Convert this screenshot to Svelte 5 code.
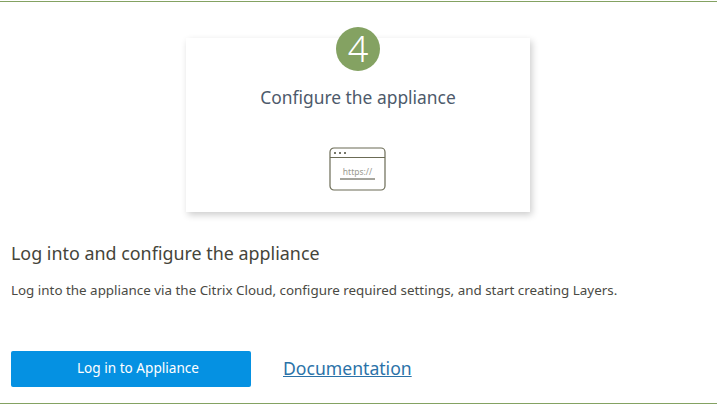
<script>
  const title = "Configure the appliance";
</script>

<div class="page">
  <div class="card">
    <div class="badge">4</div>
    <div class="card-title">{title}</div>
    <svg class="icon" width="58" height="44" viewBox="0 0 58 44" fill="none" stroke="#6b6b55">
      <rect x="1" y="1" width="55" height="42" rx="4" stroke-width="1.2" />
      <line x1="1" y1="10.5" x2="56" y2="10.5" stroke-width="1.2" />
      <circle cx="6" cy="6" r="1" fill="#4a4a3a" stroke="none" />
      <circle cx="11" cy="6" r="1" fill="#4a4a3a" stroke="none" />
      <circle cx="16" cy="6" r="1" fill="#4a4a3a" stroke="none" />
      <text x="28.5" y="28" class="url" text-anchor="middle">https://</text>
      <line x1="11" y1="32" x2="46" y2="32" stroke-width="1" stroke="#4a4a3a" />
    </svg>
  </div>

  <h2>Log into and configure the appliance</h2>
  <p>Log into the appliance via the Citrix Cloud, configure required settings, and start creating Layers.</p>

  <div class="actions">
    <button>Log in to Appliance</button>
    <a href="#docs">Documentation</a>
  </div>
</div>

<style>
  :global(body) {
    margin: 0;
    background: #fff;
  }

  .page {
    box-sizing: border-box;
    width: 717px;
    height: 403px;
    margin-top: 1px;
    padding: 36px 0 0 11px;
    border-top: 1px solid #84a262;
    border-bottom: 1px solid #84a262;
    font-family: "Noto Sans", "Open Sans", sans-serif;
    color: #45453a;
    overflow: hidden;
  }

  .card {
    position: relative;
    box-sizing: border-box;
    width: 344px;
    height: 174px;
    margin-left: 175px;
    padding-top: 47px;
    background: #fff;
    box-shadow: 2px 3px 7px rgba(0, 0, 0, 0.2);
    text-align: center;
  }

  .badge {
    position: absolute;
    top: -11px;
    left: 150px;
    width: 44px;
    height: 44px;
    border-radius: 50%;
    background: #84a262;
    color: #fff;
    font-size: 36px;
    font-weight: 300;
    line-height: 44px;
  }

  .card-title {
    font-size: 17.4px;
    line-height: 24px;
    color: #4d5a6b;
  }

  .icon {
    display: block;
    margin: 38px auto 0;
  }

  .url {
    font-size: 8.5px;
    fill: #9a9a90;
    stroke: none;
  }

  h2 {
    margin: 30px 0 0;
    font-size: 17.9px;
    line-height: 22px;
    font-weight: 400;
    color: #45453a;
  }

  p {
    margin: 17px 0 0;
    font-size: 13.4px;
    line-height: 18px;
    color: #4a4a44;
  }

  .actions {
    display: flex;
    align-items: center;
    gap: 32px;
    margin-top: 52px;
  }

  button {
    width: 240px;
    height: 36px;
    padding: 0 0 3px 14px;
    border: none;
    border-radius: 2px;
    background: #0591e2;
    color: #fff;
    font: inherit;
    font-size: 13.6px;
  }

  a {
    font-size: 17.6px;
    line-height: 22px;
    margin-top: -2px;
    color: #2b72a8;
    text-decoration: underline;
  }
</style>
